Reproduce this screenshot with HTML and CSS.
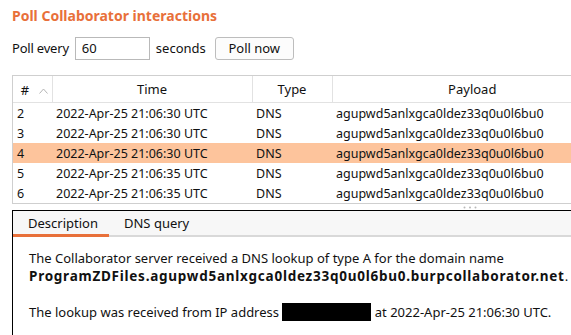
FILE: index.html
```html
<!DOCTYPE html>
<html lang="en">
<head>
    <meta charset="UTF-8">
    <title>Poll Collaborator interactions</title>
    <link rel="stylesheet" href="styles.css">
</head>
<body>
    <div class="page">
        <h1 class="title">Poll Collaborator interactions</h1>

        <div class="poll-row">
            <label for="poll-every">Poll every</label>
            <input type="text" id="poll-every" value="60">
            <span>seconds</span>
            <button class="btn">Poll now</button>
        </div>

        <div class="table-wrap">
            <table class="interactions">
                <colgroup>
                    <col class="col-num">
                    <col class="col-time">
                    <col class="col-type">
                    <col class="col-payload">
                </colgroup>
                <thead>
                    <tr>
                        <th class="num-head">#<span class="sort">
                            <svg width="9" height="6" viewBox="0 0 9 6"><path d="M0.5 5.5 L4.5 1 L8.5 5.5" fill="none" stroke="#b4b4b4" stroke-width="1"/></svg>
                        </span></th>
                        <th>Time</th>
                        <th>Type</th>
                        <th>Payload</th>
                    </tr>
                </thead>
                <tbody>
                    <tr><td>2</td><td>2022-Apr-25 21:06:30 UTC</td><td>DNS</td><td>agupwd5anlxgca0ldez33q0u0l6bu0</td></tr>
                    <tr><td>3</td><td>2022-Apr-25 21:06:30 UTC</td><td>DNS</td><td>agupwd5anlxgca0ldez33q0u0l6bu0</td></tr>
                    <tr class="selected"><td>4</td><td>2022-Apr-25 21:06:30 UTC</td><td>DNS</td><td>agupwd5anlxgca0ldez33q0u0l6bu0</td></tr>
                    <tr><td>5</td><td>2022-Apr-25 21:06:35 UTC</td><td>DNS</td><td>agupwd5anlxgca0ldez33q0u0l6bu0</td></tr>
                    <tr><td>6</td><td>2022-Apr-25 21:06:35 UTC</td><td>DNS</td><td>agupwd5anlxgca0ldez33q0u0l6bu0</td></tr>
                </tbody>
            </table>
        </div>

        <div class="splitter">
            <svg class="grip" width="14" height="3" viewBox="0 0 14 3">
                <circle cx="1.5" cy="1.5" r="1" fill="#b8b8b8"/>
                <circle cx="7" cy="1.5" r="1" fill="#b8b8b8"/>
                <circle cx="12.5" cy="1.5" r="1" fill="#b8b8b8"/>
            </svg>
        </div>

        <div class="detail">
            <div class="tabs">
                <div class="tab active">Description</div>
                <div class="tab">DNS query</div>
            </div>
            <div class="detail-body">
                <p>The Collaborator server received a DNS lookup of type A for the domain name<br>
                <b>ProgramZDFiles.agupwd5anlxgca0ldez33q0u0l6bu0.burpcollaborator.net</b>.</p>
                <p>The lookup was received from IP address <span class="redacted"></span> at 2022-Apr-25 21:06:30 UTC.</p>
            </div>
        </div>
    </div>
</body>
</html>
```

FILE: styles.css
```css
body {
    margin: 0;
    font-family: "Noto Sans", "Open Sans", sans-serif;
    font-size: 13px;
    color: #111;
    background-color: #fff;
    overflow: hidden;
}
.page {
    padding-left: 12px;
    width: 600px;
}
.title {
    margin: 0;
    padding-top: 6px;
    height: 30px;
    font-size: 14px;
    font-weight: bold;
    color: #e8703a;
}
.poll-row {
    display: flex;
    align-items: center;
    height: 24px;
}
.poll-row label {
    letter-spacing: -0.2px;
}
.poll-row input {
    width: 67px;
    height: 21px;
    margin: 0 6px 0 6px;
    padding: 0 0 0 6px;
    border: 1px solid #b9b9b9;
    font: inherit;
    color: #111;
}
.btn {
    margin-left: 9px;
    width: 79px;
    height: 23px;
    padding: 0;
    background-color: #fcfcfc;
    border: 1px solid #bdbdbd;
    border-radius: 3px;
    font: inherit;
    color: #111;
}
.table-wrap {
    margin-top: 15px;
    border: 1px solid #cfcfcf;
    border-right: none;
}
.interactions {
    width: 100%;
    table-layout: fixed;
    border-collapse: collapse;
    font-size: 12.5px;
}
.col-num { width: 39px; }
.col-time { width: 200px; }
.col-type { width: 80px; }
.interactions th {
    height: 26px;
    padding: 0;
    font-size: 13px;
    font-weight: normal;
    text-align: center;
    border-bottom: 1px solid #e2e2e2;
    border-left: 1px solid #e2e2e2;
}
.interactions th:first-child {
    border-left: none;
}
.num-head {
    padding-left: 4px !important;
}
.num-head .sort {
    margin-left: 6px;
    vertical-align: 1px;
}
.interactions td {
    height: 20px;
    padding: 0 0 0 4px;
    white-space: nowrap;
}
.interactions tr.selected td {
    background-color: #fdc49c;
}
.splitter {
    height: 6px;
    position: relative;
}
.grip {
    position: absolute;
    left: 451px;
    top: 2px;
}
.detail {
    border-top: 1px solid #000;
    border-left: 1px solid #000;
    height: 140px;
}
.tabs {
    display: flex;
    height: 24px;
    background-color: #f7f7f7;
    border-bottom: 2px solid #d9d9d9;
}
.tab {
    padding: 0 15px;
    line-height: 24px;
}
.tab.active {
    width: 66px;
    box-shadow: inset 0 -3px 0 #e8703a;
    margin-bottom: -2px;
    padding-bottom: 2px;
}
.detail-body {
    padding: 12px 0 0 16px;
}
.detail-body p {
    margin: 0 0 18px 0;
    line-height: 18px;
}
.detail-body b {
    font-size: 13.5px;
    letter-spacing: 0.75px;
}
.redacted {
    display: inline-block;
    width: 89px;
    height: 18px;
    background-color: #000;
    vertical-align: -4px;
}
```
